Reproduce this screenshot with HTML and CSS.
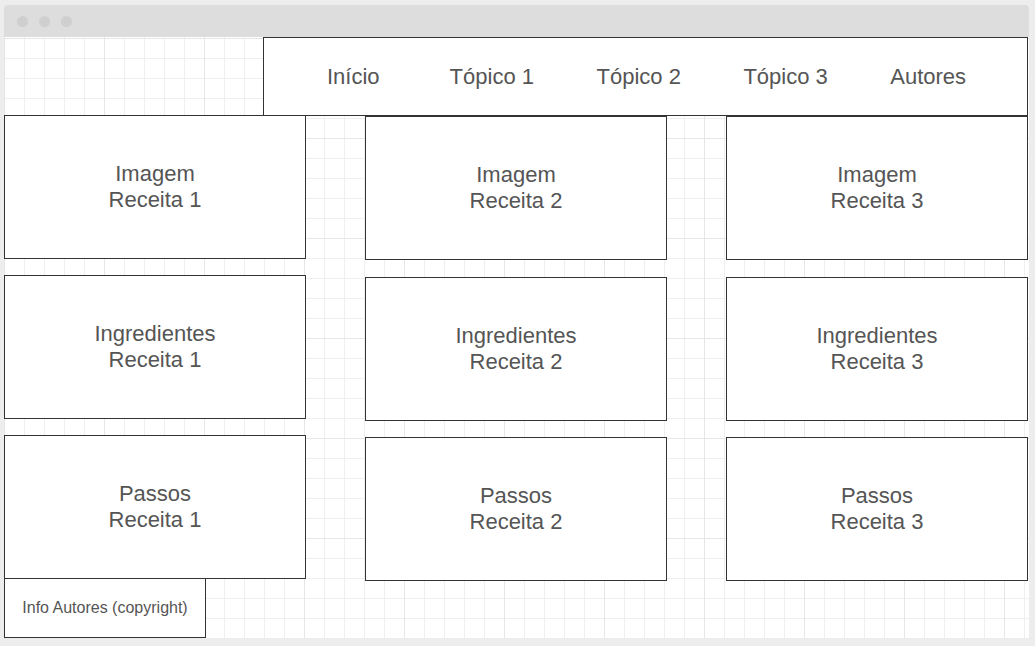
FILE: index.html
```html
<!DOCTYPE html>
<html lang="pt">
<head>
    <meta charset="UTF-8">
    <meta name="viewport" content="width=device-width, initial-scale=1.0">
    <title>Receitas - Wireframe</title>
    <link rel="stylesheet" href="styles.css">
</head>
<body>

    <div class="window">
        <!-- Barra do navegador -->
        <div class="titlebar">
            <span class="dot"></span>
            <span class="dot"></span>
            <span class="dot"></span>
        </div>

        <div class="canvas">
            <!-- Menu -->
            <nav class="nav">
                <a href="#">Início</a>
                <a href="#">Tópico 1</a>
                <a href="#">Tópico 2</a>
                <a href="#">Tópico 3</a>
                <a href="#">Autores</a>
            </nav>

            <!-- Receitas -->
            <div class="recipes">
                <div class="col">
                    <div class="box">Imagem<br>Receita 1</div>
                    <div class="box">Ingredientes<br>Receita 1</div>
                    <div class="box">Passos<br>Receita 1</div>
                </div>
                <div class="col shifted">
                    <div class="box">Imagem<br>Receita 2</div>
                    <div class="box">Ingredientes<br>Receita 2</div>
                    <div class="box">Passos<br>Receita 2</div>
                </div>
                <div class="col shifted">
                    <div class="box">Imagem<br>Receita 3</div>
                    <div class="box">Ingredientes<br>Receita 3</div>
                    <div class="box">Passos<br>Receita 3</div>
                </div>
            </div>

            <!-- Rodapé -->
            <footer class="footer">Info Autores (copyright)</footer>
        </div>
    </div>

</body>
</html>
```

FILE: styles.css
```css
/* General */
body {
    margin: 0;
    padding: 5px 0 0 4px;
    background: #ededed;
    font-family: "Liberation Sans", Arial, sans-serif;
    color: #555;
    height: 646px;
    box-sizing: border-box;
    overflow: hidden;
}

.window {
    width: 1025px;
    border-radius: 4px 4px 0 0;
    overflow: hidden;
}

/* Browser bar */
.titlebar {
    height: 32px;
    background: #dddddd;
    display: flex;
    align-items: center;
    gap: 11px;
    padding-left: 13px;
}

.dot {
    width: 11px;
    height: 11px;
    border-radius: 50%;
    background: #cfcfcf;
}

/* Grid canvas */
.canvas {
    height: 601px;
    background-color: #fff;
    background-image:
        linear-gradient(to right, #e6e6e6 1px, transparent 1px),
        linear-gradient(to bottom, #e6e6e6 1px, transparent 1px),
        linear-gradient(to right, #efefef 1px, transparent 1px),
        linear-gradient(to bottom, #efefef 1px, transparent 1px);
    background-size: 100px 100px, 100px 100px, 20px 20px, 20px 20px;
    background-position: 0 1px, 0 1px, 0 1px, 0 1px;
}

/* Nav */
.nav {
    margin-left: 259px;
    width: 765px;
    height: 79px;
    box-sizing: border-box;
    border: 1px solid #333;
    background: #fff;
    display: flex;
    align-items: center;
    gap: 62.5px;
    padding: 0 0 0 63px;
}

.nav a {
    color: #555;
    text-decoration: none;
    font-size: 22px;
}

.nav a:first-child {
    margin-right: 7.5px;
}

/* Recipe boxes */
.recipes {
    display: flex;
    gap: 59px;
    align-items: flex-start;
    margin-top: -1px;
}

.col {
    display: flex;
    flex-direction: column;
    gap: 16px;
    width: 302px;
}

.col.shifted {
    margin-top: 1px;
    gap: 16.5px;
}

.box {
    height: 144px;
    box-sizing: border-box;
    border: 1px solid #333;
    background: #fff;
    display: flex;
    align-items: center;
    justify-content: center;
    text-align: center;
    font-size: 22px;
    line-height: 26px;
}

/* Footer */
.footer {
    width: 202px;
    height: 60px;
    margin-top: -3px;
    box-sizing: border-box;
    border: 1px solid #333;
    background: #fff;
    display: flex;
    align-items: center;
    justify-content: center;
    font-size: 16px;
}
```
